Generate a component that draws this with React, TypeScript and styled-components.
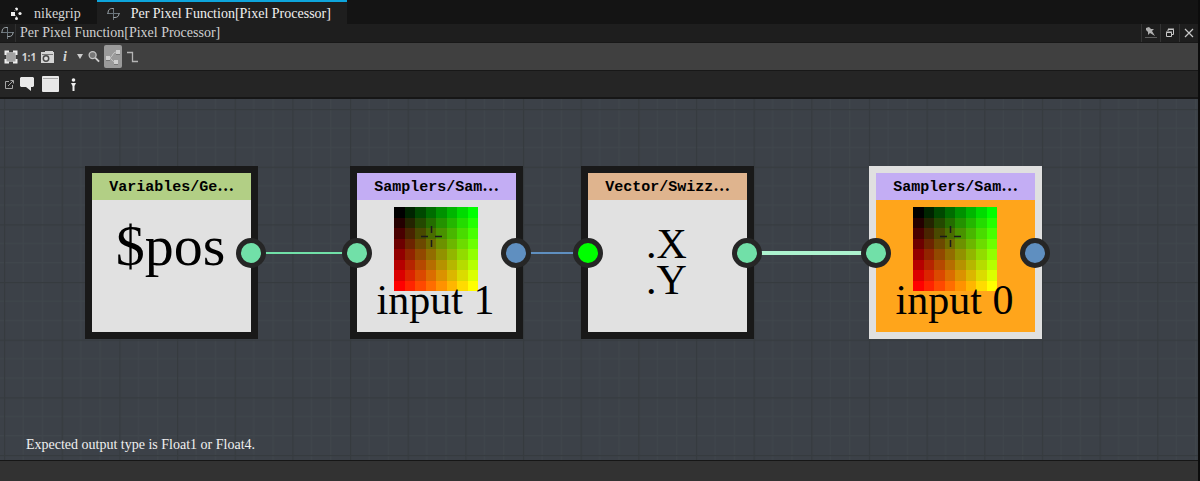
import React from "react";
import styled, { createGlobalStyle, css } from "styled-components";

const serif = `"Liberation Serif", "Noto Sans CJK SC", serif`;

const GlobalStyle = createGlobalStyle`
  * { box-sizing: border-box; }
  html, body { margin: 0; background: #323232; }
  button { font: inherit; color: inherit; border: 0; padding: 0; background: none; }
`;

const Window = styled.div`
  min-height: 100vh;
  display: flex;
  flex-direction: column;
  border-right: 2px solid #0c0c0c;
  background: #323232;
  color: #d6d6d6;
  font: 14px/18px ${serif};
`;

const TabBar = styled.nav`
  display: flex;
  height: 24px;
  background: #141414;
`;

const Tab = styled.button<{ $active?: boolean }>`
  display: flex;
  align-items: center;
  gap: 11px;
  padding: 2px 16px 0 10px;
  border-top: 2px solid transparent;
  ${(p) =>
    p.$active &&
    css`
      background: #1e1e1e;
      color: #f0f0f0;
      border-top-color: #0ea5dc;
    `}
`;

const TitleBar = styled.header`
  display: flex;
  height: 18px;
  background: #1e1e1e;
`;

const TitleIcon = styled.span`
  display: flex;
  align-items: center;
  width: 16px;
  padding-left: 1px;
  border-right: 1px solid #303030;
`;

const Title = styled.h1`
  flex: 1;
  margin: 0;
  padding-left: 4px;
  font: inherit;
  color: #d0d0d0;
`;

const WindowButton = styled.button`
  display: flex;
  align-items: center;
  justify-content: center;
  width: 19px;
  border-left: 1px solid #343434;
`;

const Toolbar = styled.div<{ $dark?: boolean }>`
  display: flex;
  align-items: center;
  height: ${(p) => (p.$dark ? 29 : 28)}px;
  padding-left: 4px;
  gap: ${(p) => (p.$dark ? 6 : 4)}px;
  background: ${(p) => (p.$dark ? "#252525" : "#404040")};
  border-top: 1px solid #181818;
  border-bottom: ${(p) => (p.$dark ? "2px solid #161616" : "0")};
`;

const Tool = styled.button<{ $w: number; $on?: boolean }>`
  display: flex;
  align-items: center;
  justify-content: center;
  width: ${(p) => p.$w}px;
  height: 23px;
  border-radius: 2px;
  background: ${(p) => (p.$on ? "#9a9a9a" : "none")};
`;

const Scale = styled.span`
  font: bold 10px/12px "Open Sans", sans-serif;
`;

const Info = styled.span`
  font: italic bold 14px/16px ${serif};
`;

const Graph = styled.main`
  position: relative;
  flex: 1;
  min-height: 361px;
  overflow: hidden;
  background: #3c4148;
`;

const Backdrop = styled.svg`
  position: absolute;
  inset: 0;
  width: 100%;
  height: 100%;
`;

const NodeCard = styled.article<{ $x: number; $selected?: boolean }>`
  position: absolute;
  left: ${(p) => p.$x}px;
  top: 67px;
  width: 173px;
  height: 173px;
  display: flex;
  flex-direction: column;
  border: 7px solid ${(p) => (p.$selected ? "#e0e0e0" : "#191919")};
  background: ${(p) => (p.$selected ? "#ffa51b" : "#e1e1e1")};
  color: #000;
`;

const NodeTitle = styled.h2<{ $color: string }>`
  margin: 0;
  height: 27px;
  background: ${(p) => p.$color};
  text-align: center;
  white-space: nowrap;
  font: bold 15px/30px "Liberation Mono", monospace;
`;

const Ellipsis = styled.span`
  font-family: "Noto Sans CJK SC", sans-serif;
  line-height: 1;
`;

const NodeBody = styled.div<{ $top: number }>`
  flex: 1;
  display: flex;
  flex-direction: column;
  align-items: center;
  padding: ${(p) => p.$top}px 2px 0 0;
`;

const Variable = styled.span`
  font: 58px/64px ${serif};
`;

const Caption = styled.span`
  font: 42px/18px ${serif};
`;

const Components = styled.span`
  font: 42px/36px ${serif};
`;

const Port = styled.i<{ $color: string; $out?: boolean }>`
  position: absolute;
  top: 65px;
  ${(p) => (p.$out ? "right" : "left")}: -15px;
  width: 30px;
  height: 30px;
  border: 5px solid #262626;
  border-radius: 50%;
  background: ${(p) => p.$color};
`;

const Message = styled.p`
  position: absolute;
  left: 26px;
  bottom: 6px;
  margin: 0;
  color: #f0f0f0;
`;

const Footer = styled.footer`
  height: 21px;
  border-top: 1px solid #161616;
  background: #323232;
`;

const FunctionIcon = () => (
  <svg width="13" height="14" viewBox="0 0 13 14" fill="none">
    <path d="M0 6.500H13M6.500 1V13" stroke="#6a747b" />
    <path d="M1 6.500C1 2.500 3 1.500 5 1.500H6.500M6.500 10.500H8C10.500 10.500 12 9 12 6.500" stroke="#a0a8ad" />
  </svg>
);

const GraphIcon = () => (
  <svg width="13" height="14" viewBox="0 0 13 14" fill="#f0f0f0">
    <rect x="1" y="5" width="4" height="4" />
    <circle cx="6.500" cy="2" r="1.500" />
    <circle cx="10" cy="6.500" r="1.600" />
    <circle cx="6.500" cy="11.500" r="1.500" />
    <path d="M4 4L6 2M5 8L7 10" stroke="#666" />
  </svg>
);

const Heatmap = () => {
  const steps = [0, 1, 2, 3, 4, 5, 6, 7];
  const level = [0, 36, 73, 109, 146, 182, 219, 255];
  return (
    <svg width="84" height="84" viewBox="0 0 84 84">
      {steps.map((r) =>
        steps.map((c) => (
          <rect
            key={`${r}-${c}`}
            x={c * 10.5}
            y={r * 10.5}
            width="10.5"
            height="10.5"
            shapeRendering="crispEdges"
            fill={`rgb(${level[r]},${level[c]},0)`}
          />
        ))
      )}
      <path d="M37.500 19V26M37.500 33V40M27 29.500H34M41 29.500H48" stroke="#1a1a1a" strokeWidth="1.500" />
    </svg>
  );
};

const mint = "#71e0a8";
const blue = "#5f8fc0";

type NodeProps = {
  x: number;
  title: string;
  color: string;
  top: number;
  input?: string;
  output: string;
  selected?: boolean;
  children: React.ReactNode;
};

const GraphNode = ({ x, title, color, top, input, output, selected, children }: NodeProps) => (
  <NodeCard $x={x} $selected={selected}>
    <NodeTitle $color={color}>
      {title}
      <Ellipsis>⋯</Ellipsis>
    </NodeTitle>
    <NodeBody $top={top}>{children}</NodeBody>
    {input && <Port $color={input} />}
    <Port $color={output} $out />
  </NodeCard>
);

export default function App() {
  return (
    <Window>
      <GlobalStyle />
      <TabBar>
        <Tab>
          <GraphIcon />
          nikegrip
        </Tab>
        <Tab $active>
          <FunctionIcon />
          Per Pixel Function[Pixel Processor]
        </Tab>
      </TabBar>
      <TitleBar>
        <TitleIcon>
          <FunctionIcon />
        </TitleIcon>
        <Title>Per Pixel Function[Pixel Processor]</Title>
        <WindowButton aria-label="Pin">
          <svg width="12" height="12" viewBox="0 0 12 12">
            <path d="M1 1L4 0L6 2L9 2L7 4L10 9L5 6L3 8L3 5L1 3Z" fill="#b0b0b0" />
            <path d="M0 10.500H12" stroke="#5c5c5c" />
          </svg>
        </WindowButton>
        <WindowButton aria-label="Restore">
          <svg width="10" height="10" viewBox="0 0 10 10" fill="none" stroke="#c8c8c8">
            <path d="M3 3V1.500H8.500V6.500H7M3 1H9" />
            <path d="M1.500 4.500H6.500V8.500H1.500ZM1 4H7" />
          </svg>
        </WindowButton>
        <WindowButton aria-label="Close">
          <svg width="10" height="10" viewBox="0 0 10 10" stroke="#c8c8c8" strokeWidth="1.200">
            <path d="M1 1L9 9M9 1L1 9" />
          </svg>
        </WindowButton>
      </TitleBar>
      <Toolbar>
        <Tool $w={14} aria-label="Fit view">
          <svg width="14" height="14" viewBox="0 0 14 14">
            <rect x="2" y="2" width="10" height="10" fill="#a2a2a2" />
            <path d="M1.500 5V1.500H5M9 1.500H12.500V5M12.500 9V12.500H9M5 12.500H1.500V9" fill="none" stroke="#eee" strokeWidth="2" />
          </svg>
        </Tool>
        <Tool $w={14}>
          <Scale>1:1</Scale>
        </Tool>
        <Tool $w={14} aria-label="Snapshot">
          <svg width="13" height="12" viewBox="0 0 13 12">
            <path d="M0 1H4V0H12V1H13V12H0Z" fill="#d4d4d4" />
            <path d="M1 3.500H12" stroke="#777" />
            <circle cx="5" cy="7.500" r="2.700" fill="#ddd" stroke="#4a4a4a" strokeWidth="1.500" />
          </svg>
        </Tool>
        <Tool $w={14}>
          <Info>i</Info>
        </Tool>
        <Tool $w={8} aria-label="More information">
          <svg width="6" height="5" viewBox="0 0 6 5">
            <path d="M0 0H6L3 5Z" fill="#ccc" />
          </svg>
        </Tool>
        <Tool $w={12} aria-label="Search">
          <svg width="13" height="13" viewBox="0 0 13 13" fill="none">
            <circle cx="5" cy="5" r="3.800" fill="#777" stroke="#c4c4c4" strokeWidth="1.400" />
            <path d="M8 8L12 12" stroke="#d0d0d0" strokeWidth="2" />
          </svg>
        </Tool>
        <Tool $w={18} $on aria-label="Curved links">
          <svg width="14" height="16" viewBox="0 0 14 16" fill="#cfcfcf">
            <path d="M2 9C8 9 5 3 11 3M3 9C6 9 6 13 9 13" fill="none" stroke="#c4c4c4" />
            <rect x="0" y="7" width="4" height="4" />
            <rect x="10" y="1" width="4" height="4" />
            <rect x="8" y="11" width="4" height="4" />
            <path d="M0 11.500H4M10 5.500H14M8 15.500H12" stroke="#777" />
          </svg>
        </Tool>
        <Tool $w={12} aria-label="Straight links">
          <svg width="11" height="12" viewBox="0 0 11 12" fill="none" stroke="#b4b4b4" strokeWidth="1.300">
            <path d="M0 1.500H5.500V10.500H11" />
          </svg>
        </Tool>
      </Toolbar>
      <Toolbar $dark>
        <Tool $w={10} aria-label="Open">
          <svg width="9" height="9" viewBox="0 0 9 9" fill="none" stroke="#a6a6a6">
            <path d="M4 1.500H0.500V8.500H7.500V5M3 6L8 1M5.500 0.500H8.500V3.500" />
          </svg>
        </Tool>
        <Tool $w={14} aria-label="Comment">
          <svg width="14" height="14" viewBox="0 0 14 14" fill="#e8e8e8">
            <path d="M1 0H13L14 1V9L13 10H11V14L6 10H1L0 9V1Z" />
          </svg>
        </Tool>
        <Tool $w={20} aria-label="Frame">
          <svg width="17" height="16" viewBox="0 0 17 16">
            <rect width="17" height="16" rx="1" fill="#e8e8e8" />
            <path d="M1 2.500H16" stroke="#a8a8a8" />
          </svg>
        </Tool>
        <Tool $w={14} aria-label="Dot">
          <svg width="5" height="13" viewBox="0 0 5 13" fill="#eee">
            <circle cx="2.500" cy="2" r="1.800" />
            <path d="M0 5H5L3.500 8V13H1.500V8Z" />
          </svg>
        </Tool>
      </Toolbar>
      <Graph>
        <Backdrop aria-hidden="true">
          <defs>
            <pattern id="grid" x="4" y="10" width="57.66" height="57.66" patternUnits="userSpaceOnUse">
              <path d="M19.200 0V58M38.400 0V58M0 19.200H58M0 38.400H58" stroke="#40464c" />
              <path d="M0 0.500H58M0.500 0V58" stroke="#363b3f" strokeWidth="1.500" />
            </pattern>
          </defs>
          <rect width="100%" height="100%" fill="url(#grid)" />
          <path d="M265 154H345" stroke={mint} strokeWidth="2" />
          <path d="M529 154H574" stroke={blue} strokeWidth="2" />
          <path d="M760 154H863" stroke="#adf3cf" strokeWidth="4" />
        </Backdrop>
        <GraphNode x={85} title="Variables/Ge" color="#b2cf85" top={14} output={mint}>
          <Variable>$pos</Variable>
        </GraphNode>
        <GraphNode x={350} title="Samplers/Sam" color="#c3adf4" top={7} input={mint} output={blue}>
          <Heatmap />
          <Caption>input 1</Caption>
        </GraphNode>
        <GraphNode x={581} title="Vector/Swizz" color="#dfb48e" top={26} input="#00ff00" output={mint}>
          <Components>
            .X
            <br />
            .Y
          </Components>
        </GraphNode>
        <GraphNode x={869} title="Samplers/Sam" color="#c3adf4" top={7} input={mint} output={blue} selected>
          <Heatmap />
          <Caption>input 0</Caption>
        </GraphNode>
        <Message>Expected output type is Float1 or Float4.</Message>
      </Graph>
      <Footer />
    </Window>
  );
}
